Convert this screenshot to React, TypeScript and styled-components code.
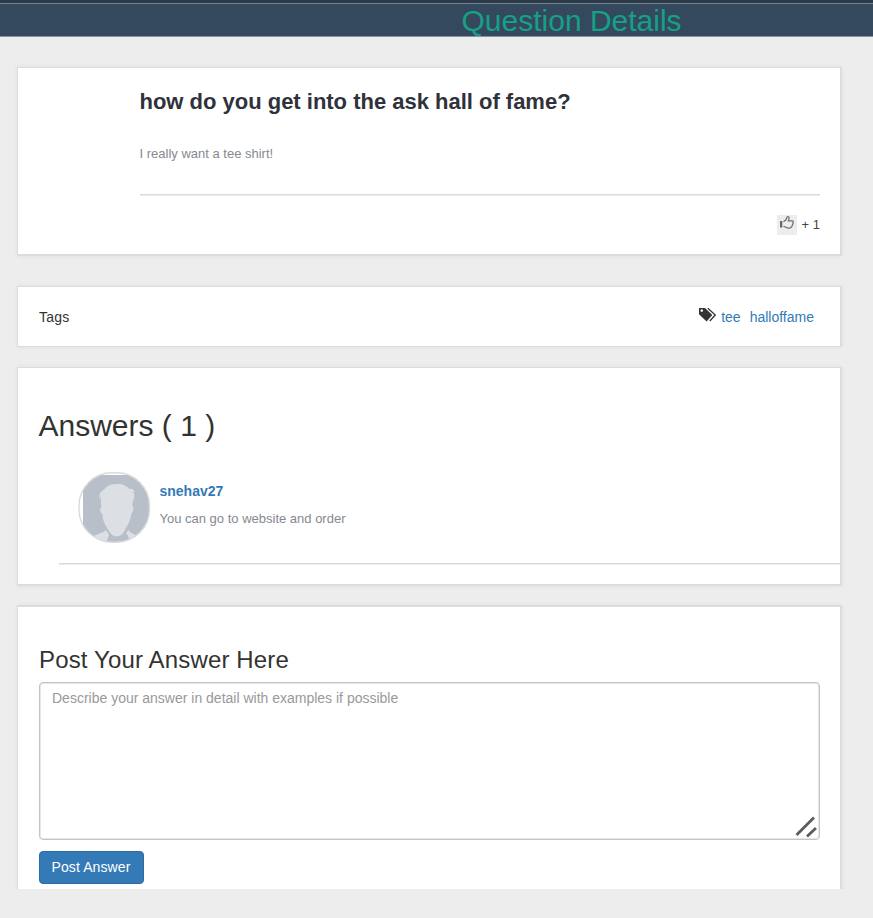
import React from "react";
import styled, { createGlobalStyle } from "styled-components";

const GlobalStyle = createGlobalStyle`
  * { box-sizing: border-box; }
  body { margin: 0; background: #ededed; color: #333; font: 14px/20px "Liberation Sans", Arial, sans-serif; }
  h1, h2, h3, p { margin: 0; font-weight: 400; white-space: nowrap; }
  svg { display: block; flex: none; }
`;

const Page = styled.div`
  width: 873px;
  height: 918px;
  overflow: hidden;
  background: #ededed;
`;

const Header = styled.header`
  height: 37px;
  border-top: 3px solid #2b3b4b;
  background: #34495e;
  box-shadow: inset 0 1px #77828d, inset 0 -1px #8593a1;
  padding: 1px 0 0 461.5px;
`;

const HeaderTitle = styled.h1`
  font-size: 30px;
  line-height: 33px;
  color: #16a085;
`;

const Main = styled.main`
  height: 852px;
  padding: 30px 0 0 17px;
  overflow: hidden;
`;

const Card = styled.section<{ $h: number; $gap?: number; $top?: number; $bottom?: number }>`
  width: 825px;
  height: ${(p) => p.$h}px;
  margin-bottom: ${(p) => p.$gap ?? 0}px;
  background: #fff;
  border: solid #dcdcdc;
  border-width: ${(p) => p.$top ?? 1}px 2px ${(p) => p.$bottom ?? 2}px 1px;
  box-shadow: 0 0 5px rgba(0, 0, 0, 0.06);
`;

const QuestionCard = styled(Card)`
  padding: 20px 20px 0 121.5px;
`;

const QuestionTitle = styled.h2`
  font-size: 22px;
  line-height: 27px;
  font-weight: 700;
  letter-spacing: -0.01px;
  color: #2f323a;
`;

const BodyText = styled.p`
  font-size: 13px;
  line-height: 19px;
  color: #858991;
`;

const QuestionBody = styled(BodyText)`
  margin-top: 29px;
`;

const Rule = styled.hr`
  height: 2px;
  margin: 0;
  border: solid;
  border-width: 1px 0;
  border-color: #d9d9d9 #ececec #ececec;
`;

const QuestionRule = styled(Rule)`
  margin-top: 31px;
`;

const Votes = styled.div`
  display: flex;
  justify-content: flex-end;
  gap: 5px;
  margin-top: 19px;
  font-size: 13px;
  line-height: 19px;
  color: #444;
`;

const LikeButton = styled.button`
  display: flex;
  align-items: flex-start;
  width: 20px;
  height: 20px;
  padding: 1px 0 0 3px;
  border: 0;
  background: #ededed;
`;

const TagsCard = styled(Card)`
  display: flex;
  justify-content: space-between;
  padding: 20px 26px 0 21px;
`;

const TagsLabel = styled.span`
  letter-spacing: 0.25px;
`;

const TagList = styled.div`
  display: flex;
  gap: 9px;
  svg { margin-right: -5px; }
`;

const Link = styled.a`
  color: #337ab7;
  text-decoration: none;
`;

const AnswersCard = styled(Card)`
  padding: 38px 0 0 20.5px;
`;

const AnswersTitle = styled.h2`
  font-size: 30px;
  line-height: 39px;
`;

const Answer = styled.article`
  display: flex;
  gap: 9px;
  margin-top: 27px;
  padding-left: 39.5px;
  height: 91px;
`;

const AnswerContent = styled.div`
  padding-top: 9px;
  margin-left: -0.5px;
`;

const Author = styled(Link)`
  display: block;
  font-weight: 700;
  margin-bottom: 8px;
`;

const AnswerRule = styled(Rule)`
  margin-left: 20px;
`;

const FormCard = styled(Card)`
  padding: 38px 20px 0 21px;
`;

const FormTitle = styled.h3`
  font-size: 24px;
  line-height: 30px;
  letter-spacing: 0.15px;
`;

const Field = styled.div`
  position: relative;
  margin-top: 7px;
  height: 158px;
`;

const AnswerInput = styled.textarea`
  display: block;
  width: 781px;
  height: 158px;
  padding: 5px 12px;
  resize: none;
  border: 1px solid #c4c4c4;
  border-radius: 4px;
  box-shadow: inset 0 0 0 1px #e6e6e6;
  font: inherit;
  &::placeholder { color: #999; opacity: 1; }
`;

const Grip = styled.svg`
  position: absolute;
  right: 2px;
  bottom: 1px;
`;

const PostButton = styled.button`
  display: block;
  width: 105px;
  height: 33px;
  margin-top: 11px;
  padding: 0 1px 2px 0;
  border: 1px solid #2e6da4;
  border-radius: 4px;
  background: #337ab7;
  color: #fff;
  font: inherit;
  letter-spacing: 0.1px;
`;

const Avatar = () => (
  <svg width="73" height="71" viewBox="0 0 73 71">
    <defs>
      <clipPath id="avatar-round"><rect x="1" y="0.8" width="70.5" height="69.4" rx="33" /></clipPath>
    </defs>
    <rect x="1" y="0.8" width="70.5" height="69.4" rx="33" fill="#fff" />
    <g clipPath="url(#avatar-round)">
      <path d="M5 3h67v68H5z" fill="#b8bfc9" />
      <path d="M15 64c5-2 9-3 12-5l1-1 3 5-3 8H15z" fill="#dce0e4" />
      <path d="M50 58l1 1c3 3 7 4 12 6v6H52l-2-8-2-1z" fill="#dce0e4" />
      <path d="M24.5 42c-2-1-3-4-2-6l1-1c-1-4-1-8 0-12l-2 4c-1-5 2-8 5-10 3-4 8-5 13-5 6 0 9 2 12 5 3-1 5 1 5 3l-2-.5c3 3 2 7 0 10v5l1 1c0 3-1 5-2 6-1 6-3 11-6 15-2 5-5 8-9 8s-7-4-9-8c-3-4-5-9-5-14.5z" fill="#dce0e4" />
    </g>
    <rect x="1" y="0.8" width="70.5" height="69.4" rx="33" fill="none" stroke="#dadada" strokeWidth="1.4" />
  </svg>
);

const ThumbIcon = () => (
  <svg width="14" height="13" viewBox="0 0 14 13">
    <path d="M0 5h2.3v6.5H0z" fill="#666" />
    <path d="M3.4 5.6C5.4 4.9 6.3 3.6 6.7 2 7 .3 9 .3 9.1 1.900c.1 1.200-.5 2-.8 3h3.700c1.500 0 1.500 1.500.8 2.100.4.8.1 1.500-.5 1.900.1.900-.2 1.400-.8 1.700-.2 1-.8 1.600-2 1.600-2.700 0-3.300-.6-4.400-1.300L3.400 10.500" fill="none" stroke="#707070" strokeWidth="1.2" />
  </svg>
);

const TagsIcon = () => (
  <svg width="19" height="16" viewBox="0 0 19 16">
    <path fillRule="evenodd" d="M1.200 1H7l7.300 7-5.700 6.400L1 7.200V1zM3.700 2.200a1.300 1.300 0 1 0 .1 0z" fill="#333" />
    <path d="M9.800 1.200L17.300 8l-5.500 6" fill="none" stroke="#333" strokeWidth="1.3" />
  </svg>
);

export default function App() {
  return (
    <Page>
      <GlobalStyle />
      <Header><HeaderTitle>Question Details</HeaderTitle></Header>
      <Main>
        <QuestionCard $h={189} $gap={30}>
          <QuestionTitle>how do you get into the ask hall of fame?</QuestionTitle>
          <QuestionBody>I really want a tee shirt!</QuestionBody>
          <QuestionRule />
          <Votes><LikeButton aria-label="Like"><ThumbIcon /></LikeButton><span>+ 1</span></Votes>
        </QuestionCard>
        <TagsCard $h={61} $gap={20} $bottom={1}>
          <TagsLabel>Tags</TagsLabel>
          <TagList><TagsIcon /><Link>tee</Link><Link>halloffame</Link></TagList>
        </TagsCard>
        <AnswersCard $h={219} $gap={19}>
          <AnswersTitle>Answers ( 1 )</AnswersTitle>
          <Answer>
            <Avatar />
            <AnswerContent>
              <Author>snehav27</Author>
              <BodyText>You can go to website and order</BodyText>
            </AnswerContent>
          </Answer>
          <AnswerRule />
        </AnswersCard>
        <FormCard $h={330} $top={2}>
          <FormTitle>Post Your Answer Here</FormTitle>
          <Field>
            <AnswerInput placeholder="Describe your answer in detail with examples if possible" />
            <Grip width="24" height="24" viewBox="0 0 24 24">
              <path d="M2.5 20L20 2.500M13 21.500l9-8.500" stroke="#5c5c5c" strokeWidth="2.800" />
            </Grip>
          </Field>
          <PostButton>Post Answer</PostButton>
        </FormCard>
      </Main>
    </Page>
  );
}
